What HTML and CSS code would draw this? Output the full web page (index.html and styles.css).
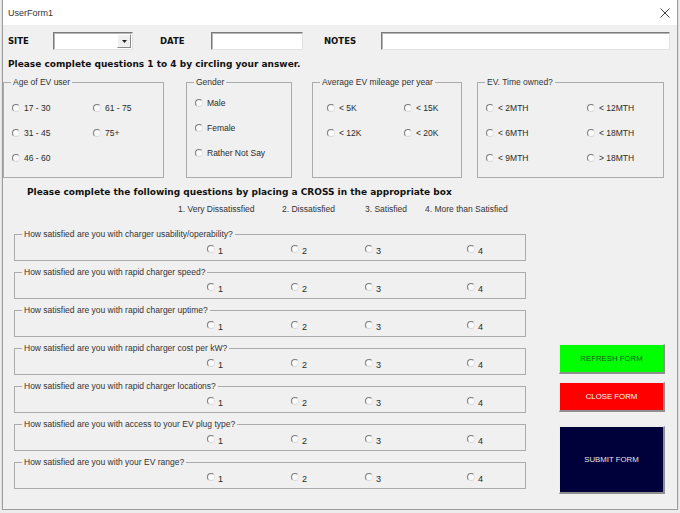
FILE: index.html
```html
<!DOCTYPE html>
<html lang="en">
<head>
    <meta charset="UTF-8">
    <title>UserForm1</title>
    <link rel="stylesheet" href="styles.css">
</head>
<body>
<div id="window">
    <div class="titlebar">
        <span class="title">UserForm1</span>
        <svg class="close" width="10" height="10" viewBox="0 0 10 10">
            <path d="M0.5 0.5 L9.5 9.5 M9.5 0.5 L0.5 9.5" stroke="#444" stroke-width="1" fill="none"/>
        </svg>
    </div>
    <div class="form">
        <div class="toprow">
            <span class="field-label site">SITE</span>
            <div class="combo">
                <div class="combo-btn">
                    <svg width="5" height="3" viewBox="0 0 5 3"><path d="M0 0 L5 0 L2.5 3 Z" fill="#222"/></svg>
                </div>
            </div>
            <span class="field-label date">DATE</span>
            <div class="textbox date-box"></div>
            <span class="field-label notes">NOTES</span>
            <div class="textbox notes-box"></div>
        </div>

        <div class="heading first">Please complete questions 1 to 4 by circling your answer.</div>

        <div class="groups">
            <fieldset class="frame age">
                <legend>Age of EV user</legend>
                <div class="opts">
                    <label class="opt"><span class="radio"></span>17 - 30</label>
                    <label class="opt"><span class="radio"></span>61 - 75</label>
                    <label class="opt"><span class="radio"></span>31 - 45</label>
                    <label class="opt"><span class="radio"></span>75+</label>
                    <label class="opt"><span class="radio"></span>46 - 60</label>
                </div>
            </fieldset>
            <fieldset class="frame gender">
                <legend>Gender</legend>
                <div class="opts">
                    <label class="opt"><span class="radio"></span>Male</label>
                    <label class="opt"><span class="radio"></span>Female</label>
                    <label class="opt"><span class="radio"></span>Rather Not Say</label>
                </div>
            </fieldset>
            <fieldset class="frame mileage">
                <legend>Average EV mileage per year</legend>
                <div class="opts">
                    <label class="opt"><span class="radio"></span>&lt; 5K</label>
                    <label class="opt"><span class="radio"></span>&lt; 15K</label>
                    <label class="opt"><span class="radio"></span>&lt; 12K</label>
                    <label class="opt"><span class="radio"></span>&lt; 20K</label>
                </div>
            </fieldset>
            <fieldset class="frame owned">
                <legend>EV. Time owned?</legend>
                <div class="opts">
                    <label class="opt"><span class="radio"></span>&lt; 2MTH</label>
                    <label class="opt"><span class="radio"></span>&lt; 12MTH</label>
                    <label class="opt"><span class="radio"></span>&lt; 6MTH</label>
                    <label class="opt"><span class="radio"></span>&lt; 18MTH</label>
                    <label class="opt"><span class="radio"></span>&lt; 9MTH</label>
                    <label class="opt"><span class="radio"></span>&gt; 18MTH</label>
                </div>
            </fieldset>
        </div>

        <div class="heading second">Please complete the following questions by placing a CROSS in the appropriate box</div>

        <div class="scale">
            <span class="s1">1. Very Dissatissfied</span>
            <span class="s2">2. Dissatisfied</span>
            <span class="s3">3. Satisfied</span>
            <span class="s4">4. More than Satisfied</span>
        </div>

        <div class="main">
            <div class="questions">
                <fieldset class="frame q">
                    <legend>How satisfied are you with charger usability/operability?</legend>
                    <div class="opts">
                        <label class="opt"><span class="radio"></span><span class="num">1</span></label>
                        <label class="opt"><span class="radio"></span><span class="num">2</span></label>
                        <label class="opt"><span class="radio"></span><span class="num">3</span></label>
                        <label class="opt"><span class="radio"></span><span class="num">4</span></label>
                    </div>
                </fieldset>
                <fieldset class="frame q">
                    <legend>How satisfied are you with rapid charger speed?</legend>
                    <div class="opts">
                        <label class="opt"><span class="radio"></span><span class="num">1</span></label>
                        <label class="opt"><span class="radio"></span><span class="num">2</span></label>
                        <label class="opt"><span class="radio"></span><span class="num">3</span></label>
                        <label class="opt"><span class="radio"></span><span class="num">4</span></label>
                    </div>
                </fieldset>
                <fieldset class="frame q">
                    <legend>How satisfied are you with rapid charger uptime?</legend>
                    <div class="opts">
                        <label class="opt"><span class="radio"></span><span class="num">1</span></label>
                        <label class="opt"><span class="radio"></span><span class="num">2</span></label>
                        <label class="opt"><span class="radio"></span><span class="num">3</span></label>
                        <label class="opt"><span class="radio"></span><span class="num">4</span></label>
                    </div>
                </fieldset>
                <fieldset class="frame q">
                    <legend>How satisfied are you with rapid charger cost per kW?</legend>
                    <div class="opts">
                        <label class="opt"><span class="radio"></span><span class="num">1</span></label>
                        <label class="opt"><span class="radio"></span><span class="num">2</span></label>
                        <label class="opt"><span class="radio"></span><span class="num">3</span></label>
                        <label class="opt"><span class="radio"></span><span class="num">4</span></label>
                    </div>
                </fieldset>
                <fieldset class="frame q">
                    <legend>How satisfied are you with rapid charger locations?</legend>
                    <div class="opts">
                        <label class="opt"><span class="radio"></span><span class="num">1</span></label>
                        <label class="opt"><span class="radio"></span><span class="num">2</span></label>
                        <label class="opt"><span class="radio"></span><span class="num">3</span></label>
                        <label class="opt"><span class="radio"></span><span class="num">4</span></label>
                    </div>
                </fieldset>
                <fieldset class="frame q">
                    <legend>How satisfied are you with access to your EV plug type?</legend>
                    <div class="opts">
                        <label class="opt"><span class="radio"></span><span class="num">1</span></label>
                        <label class="opt"><span class="radio"></span><span class="num">2</span></label>
                        <label class="opt"><span class="radio"></span><span class="num">3</span></label>
                        <label class="opt"><span class="radio"></span><span class="num">4</span></label>
                    </div>
                </fieldset>
                <fieldset class="frame q">
                    <legend>How satisfied are you with your EV range?</legend>
                    <div class="opts">
                        <label class="opt"><span class="radio"></span><span class="num">1</span></label>
                        <label class="opt"><span class="radio"></span><span class="num">2</span></label>
                        <label class="opt"><span class="radio"></span><span class="num">3</span></label>
                        <label class="opt"><span class="radio"></span><span class="num">4</span></label>
                    </div>
                </fieldset>
            </div>

            <div class="buttons">
                <div class="btn refresh">REFRESH FORM</div>
                <div class="btn close-form">CLOSE FORM</div>
                <div class="btn submit">SUBMIT FORM</div>
            </div>
        </div>
    </div>
</div>
</body>
</html>
```

FILE: styles.css
```css
body {
    margin: 0;
    background: #ececec;
    font-family: "Liberation Sans", Arial, sans-serif;
    font-size: 8.5px;
    color: #262626;
}

#window {
    margin-left: 2px;
    width: 674px;
    height: 509px;
    border: 1px solid #9c9c9c;
    border-top: none;
    background: #f0f0f0;
    box-shadow: 0 1px 1px rgba(0, 0, 0, 0.25);
}

.titlebar {
    height: 25px;
    background: #fff;
    display: flex;
    align-items: center;
    justify-content: space-between;
    padding: 0 7px 0 5px;
}

.title {
    font-size: 9px;
    color: #333;
}

/* top row: site / date / notes */
.toprow {
    display: flex;
    align-items: center;
    margin-top: 7px;
    height: 18px;
    padding-left: 5px;
}

.field-label {
    font-family: "DejaVu Sans", Verdana, sans-serif;
    font-weight: bold;
    font-size: 8.5px;
    color: #111;
}

.site { width: 45px; }
.date { width: 51px; margin-left: 27px; }
.notes { width: 57px; margin-left: 21px; }

.textbox,
.combo {
    box-sizing: border-box;
    height: 18px;
    background: #fff;
    border: 1px solid;
    border-color: #7a7a7a #e2e2e2 #e2e2e2 #7a7a7a;
    box-shadow: inset 1px 1px 0 #b5b5b5;
}

.combo {
    width: 80px;
    display: flex;
    justify-content: flex-end;
    padding: 1px 1px 1px 0;
}

.combo-btn {
    width: 14px;
    background: #f0f0f0;
    border: 1px solid;
    border-color: #fff #8a8a8a #8a8a8a #fff;
    box-sizing: border-box;
    display: flex;
    align-items: center;
    justify-content: center;
}

.date-box { width: 92px; }
.notes-box { width: 289px; }

.heading {
    font-family: "DejaVu Sans", Verdana, sans-serif;
    font-weight: bold;
    font-size: 9px;
    line-height: 12px;
    color: #111;
}

.heading.first {
    margin-top: 8px;
    padding-left: 5px;
}

.heading.second {
    margin-top: 8px;
    padding-left: 24px;
}

/* option frames */
.groups {
    display: flex;
    margin-top: 7px;
}

.frame {
    margin: 0;
    padding: 0;
    min-width: 0;
    border: 1px solid #ababab;
    box-sizing: border-box;
}

.frame legend {
    padding: 0 2px;
    margin-left: 7px;
    line-height: 11px;
    color: #333;
}

.groups .frame { height: 101px; }
.age { width: 161px; }
.gender { width: 106px; margin-left: 22px; }
.mileage { width: 150px; margin-left: 20px; }
.owned { width: 187px; margin-left: 15px; }

.opts {
    display: grid;
    grid-auto-rows: 25px;
    align-items: center;
    padding-top: 7px;
}

.age .opts { padding-left: 8px; grid-template-columns: 81px auto; }
.gender .opts { padding-left: 8px; padding-top: 2px; grid-template-columns: auto; }
.mileage .opts { padding-left: 14px; grid-template-columns: 77px auto; }
.owned .opts { padding-left: 8px; grid-template-columns: 101px auto; }

.opt {
    display: flex;
    align-items: center;
    gap: 4px;
    color: #2a2a2a;
}

.radio {
    width: 8px;
    height: 8px;
    box-sizing: border-box;
    border-radius: 50%;
    border: 1px solid;
    border-color: #7b7b7b #e4e4e4 #d8d8d8 #7b7b7b;
    background: #fafafa;
}

/* scale legend */
.scale {
    display: flex;
    margin-top: 6px;
    padding-left: 175px;
    line-height: 11px;
    color: #333;
}

.s1 { width: 104px; }
.s2 { width: 83px; }
.s3 { width: 60px; }

/* question frames + buttons */
.main {
    display: flex;
    align-items: flex-start;
    margin-top: 14px;
}

.questions {
    width: 512px;
    margin-left: 11px;
}

.q {
    height: 32px;
    margin-bottom: 6px;
}

.q .opts {
    padding-top: 0;
    padding-left: 192px;
    grid-auto-rows: 18px;
    grid-template-columns: 84px 74px 102px auto;
}

.q .opt { gap: 3px; }

.num {
    padding-top: 3px;
    font-size: 9px;
}

.buttons {
    width: 106px;
    margin-left: 33px;
    margin-top: 115px;
    display: flex;
    flex-direction: column;
}

.btn {
    box-sizing: border-box;
    height: 30px;
    border-style: solid;
    border-width: 1px 2px 2px 1px;
    border-color: #ececec #8f8f8f #8f8f8f #ececec;
    display: flex;
    align-items: center;
    justify-content: center;
    font-size: 7.8px;
}

.refresh {
    background: #00ff00;
    color: #1f5a1f;
}

.close-form {
    margin-top: 8px;
    background: #ff0000;
    color: #fff;
}

.submit {
    margin-top: 14px;
    height: 68px;
    background: #00003a;
    color: #e6e6e6;
}
```
